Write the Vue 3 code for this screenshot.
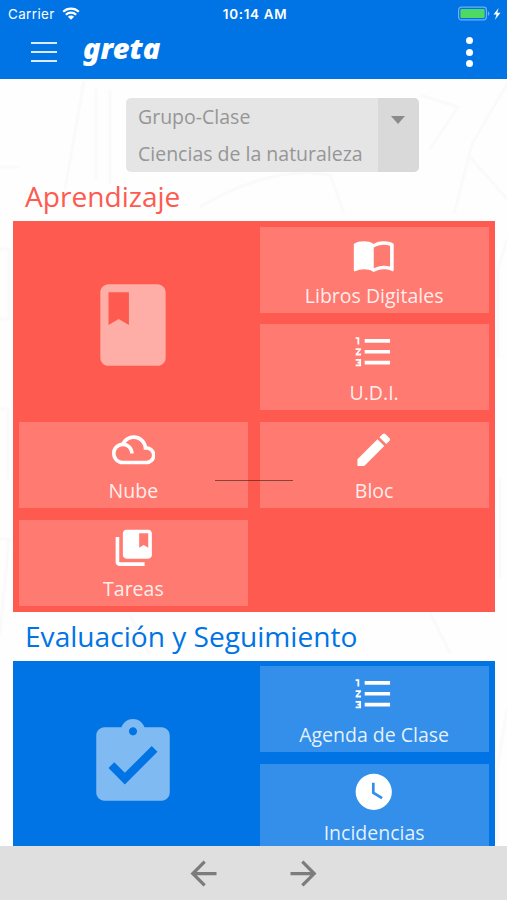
<template>
    <div id="screen">
        <header id="header">
            <div id="status-bar">
                <div class="carrier">
                    <span>Carrier</span>
                    <svg class="wifi" viewBox="0 0 18 13">
                        <path d="M1.2 4.8a11.2 11.2 0 0 1 15.6 0M3.9 7.7a7.3 7.3 0 0 1 10.2 0" fill="none" stroke="#fff" stroke-width="2.2" />
                        <path d="M9 12.8L5.9 9.8a4.4 4.4 0 0 1 6.2 0z" fill="#fff" />
                    </svg>
                </div>
                <span class="clock">10:14 AM</span>
                <div class="battery">
                    <svg viewBox="0 0 44 16">
                        <rect x=".6" y="1.1" width="27.8" height="12.8" rx="2.8" fill="none" stroke="#6eb0f3" stroke-width="1.2" />
                        <rect x="2.4" y="2.9" width="24.2" height="9.2" rx="1" fill="#4cd964" />
                        <path d="M29.9 5.2c2 .8 2 3.8 0 4.6z" fill="#6eb0f3" />
                        <path d="M40.600 2L35.500 8.500h3l-1.500 5.200L42.500 6.800h-3.200z" fill="#fff" />
                    </svg>
                </div>
            </div>
            <div id="nav-bar">
                <button class="menu-btn" aria-label="menu">
                    <i></i><i></i><i></i>
                </button>
                <span class="logo">greta</span>
                <button class="more-btn" aria-label="more">
                    <i></i><i></i><i></i>
                </button>
            </div>
        </header>

        <main id="content">
            <svg class="doodles" viewBox="0 0 507 767" fill="none" stroke="#fafafa" stroke-width="3">
                <path d="M84 2L65 110M96 10v90M110 10v95M420 16l38 12-28 42M507 5l-35 60-18 70M470 78l37 42M0 88h20M200 128q70-42 130-32l14 38" />
                <path d="M0 170h9v70H0M507 160l-9 30v90M0 330h8v70M500 400v100M0 460h9l-9 95M430 534l20 40M507 630l-10 60v75M130 536l20 40" />
            </svg>

            <div id="group-select">
                <div class="group-text">
                    <span>Grupo-Clase</span>
                    <span>Ciencias de la naturaleza</span>
                </div>
                <div class="group-arrow"></div>
            </div>

            <section v-for="s in sections" :key="s.title" :class="s.color">
                <h2>{{ s.title }}</h2>
                <div class="panel">
                    <div class="cover">
                        <svg viewBox="0 0 24 24"><path :d="icons[s.icon]" /></svg>
                    </div>
                    <div v-for="t in s.tiles" :key="t.label" class="tile">
                        <svg viewBox="0 0 24 24"><path :d="icons[t.icon]" /></svg>
                        <span>{{ t.label }}</span>
                    </div>
                </div>
            </section>
            <div class="divider"></div>
        </main>

        <footer id="footer">
            <button aria-label="back">
                <svg viewBox="0 0 24 24"><path :d="icons.back" /></svg>
            </button>
            <button aria-label="forward">
                <svg viewBox="0 0 24 24"><path :d="icons.forward" /></svg>
            </button>
        </footer>
    </div>
</template>

<script setup>
const icons = {
    book: "M18 2H6c-1.100 0-2 .9-2 2v16c0 1.100.9 2 2 2h12c1.100 0 2-.9 2-2V4c0-1.100-.9-2-2-2zM6 4h5v8l-2.500-1.500L6 12V4z",
    reader: "M21 5c-1.110-.35-2.330-.5-3.500-.5-1.950 0-4.050.4-5.500 1.500-1.450-1.100-3.550-1.500-5.500-1.500S2.450 4.900 1 6v14.650c0 .25.25.5.5.5.1 0 .15-.05.25-.05C3.100 20.450 5.050 20 6.500 20c1.950 0 4.050.4 5.500 1.500 1.350-.85 3.800-1.500 5.500-1.500 1.650 0 3.350.3 4.750 1.050.1.05.15.05.25.05.25 0 .5-.25.5-.5V6c-.6-.45-1.250-.75-2-1zm0 13.500c-1.100-.35-2.300-.5-3.500-.5-1.700 0-4.150.65-5.500 1.500V8c1.350-.85 3.800-1.500 5.500-1.500 1.200 0 2.400.15 3.500.5v11.500z",
    list: "M2 17h2v.5H3v1h1v.5H2v1h3v-4H2v1zm1-9h1V4H2v1h1v3zm-1 3h1.800L2 13.100v.9h3v-1H3.200L5 10.900V10H2v1zm5-6v2h14V5H7zm0 14h14v-2H7v2zm0-6h14v-2H7v2z",
    cloud: "M19.350 10.040C18.670 6.590 15.640 4 12 4 9.110 4 6.610 5.640 5.360 8.040 2.350 8.360 0 10.900 0 14c0 3.310 2.690 6 6 6h13c2.760 0 5-2.240 5-5 0-2.640-2.050-4.780-4.650-4.960zM19 18H6c-2.210 0-4-1.790-4-4s1.790-4 4-4 4 1.790 4 4h2c0-2.760-1.860-5.080-4.400-5.780C8.610 6.880 10.200 6 12 6c3.030 0 5.500 2.470 5.500 5.500v.5H19c1.660 0 3 1.340 3 3s-1.340 3-3 3z",
    pencil: "M3 17.250V21h3.750L17.810 9.940l-3.750-3.750L3 17.250zM20.710 7.040c.39-.39.39-1.020 0-1.410l-2.340-2.340c-.39-.39-1.020-.39-1.410 0l-1.830 1.830 3.750 3.750 1.830-1.830z",
    collection: "M4 6H2v14c0 1.100.9 2 2 2h14v-2H4V6zM20 2H8c-1.100 0-2 .9-2 2v12c0 1.100.9 2 2 2h12c1.100 0 2-.9 2-2V4c0-1.100-.9-2-2-2zm0 10l-2.500-1.500L15 12V4h5v8z",
    clipboard: "M19 3h-4.180C14.400 1.840 13.300 1 12 1c-1.300 0-2.400.84-2.820 2H5c-1.100 0-2 .9-2 2v14c0 1.100.9 2 2 2h14c1.100 0 2-.9 2-2V5c0-1.100-.9-2-2-2zm-7 0c.55 0 1 .45 1 1s-.45 1-1 1-1-.45-1-1 .45-1 1-1zm-2 14l-4-4 1.410-1.410L10 14.170l6.590-6.590L18 9l-8 8z",
    clock: "M12 2C6.500 2 2 6.500 2 12s4.500 10 10 10 10-4.500 10-10S17.500 2 12 2zm4.200 14.200L11 13V7h1.500v5.200l4.500 2.700-.8 1.300z",
    back: "M20 11H7.830l5.590-5.590L12 4l-8 8 8 8 1.410-1.410L7.830 13H20v-2z",
    forward: "M12 4l-1.410 1.410L16.170 11H4v2h12.170l-5.580 5.590L12 20l8-8z",
}

const sections = [
    {
        title: "Aprendizaje",
        color: "red",
        icon: "book",
        tiles: [
            { label: "Libros Digitales", icon: "reader" },
            { label: "U.D.I.", icon: "list" },
            { label: "Nube", icon: "cloud" },
            { label: "Bloc", icon: "pencil" },
            { label: "Tareas", icon: "collection" },
        ],
    },
    {
        title: "Evaluación y Seguimiento",
        color: "blue",
        icon: "clipboard",
        tiles: [
            { label: "Agenda de Clase", icon: "list" },
            { label: "Incidencias", icon: "clock" },
        ],
    },
]
</script>

<style>
body {
    margin: 0;
    overflow: hidden;
}
</style>

<style scoped>
#screen {
    display: flex;
    flex-direction: column;
    width: 507px;
    height: 900px;
    overflow: hidden;
    background-color: #fefefe;
    font-family: "Open Sans", "Noto Sans", sans-serif;
}

button {
    border: 0;
    padding: 0;
    background: none;
}

#header {
    flex: none;
    height: 79px;
    background-color: #0074e4;
    color: white;
}

#status-bar {
    display: grid;
    grid-template-columns: 1fr auto 1fr;
    align-items: center;
    height: 27px;
    padding: 0 5px 0 8px;
    font-family: Inter, sans-serif;
    font-size: 13.4px;
    letter-spacing: 0.4px;
}

.carrier {
    display: flex;
    align-items: center;
    gap: 7px;
}

.wifi {
    width: 18px;
    height: 13px;
}

.clock {
    font-weight: 600;
    letter-spacing: 0.7px;
}

.battery {
    justify-self: end;
    height: 16px;
}

.battery svg {
    display: block;
    width: 44px;
    height: 16px;
}

#nav-bar {
    display: flex;
    align-items: center;
    height: 50px;
    padding: 0 34.500px 0 31px;
}

.menu-btn {
    display: flex;
    flex-direction: column;
    gap: 7px;
    width: 26px;
}

.menu-btn i {
    height: 1.700px;
    background-color: #d9ebfc;
}

.logo {
    flex: 1;
    margin: -8px 0 0 26px;
    font-family: "Noto Sans", "Open Sans", sans-serif;
    font-size: 29px;
    font-weight: 900;
    font-style: italic;
    line-height: 40px;
}

.more-btn {
    display: flex;
    flex-direction: column;
    gap: 4.500px;
}

.more-btn i {
    width: 7px;
    height: 7px;
    border-radius: 50%;
    background-color: white;
}

#content {
    position: relative;
    flex: 1;
    overflow: hidden;
    padding: 19px 12.500px 0 13px;
}

.doodles {
    position: absolute;
    top: 0;
    left: 0;
    width: 507px;
    height: 767px;
}

#group-select {
    position: relative;
    display: flex;
    width: 293.500px;
    height: 74px;
    margin-left: 112.500px;
    border-radius: 5px;
    overflow: hidden;
    background-color: #e5e5e5;
    color: #969696;
    font-size: 19.500px;
}

.group-text {
    flex: 1;
    padding: 1px 0 0 12.500px;
}

.group-text span {
    display: block;
    line-height: 36.500px;
}

.group-arrow {
    width: 41px;
    background-color: #d9d9d9;
}

.group-arrow::before {
    content: "";
    display: block;
    width: 0;
    margin: 18px 0 0 13px;
    border: 7.500px solid transparent;
    border-top: 8px solid #8b8b8b;
    border-bottom: 0;
}

section {
    position: relative;
}

h2 {
    box-sizing: border-box;
    height: 49px;
    margin: 0;
    padding: 5px 0 0 12px;
    font-size: 28.100px;
    font-weight: 400;
    line-height: 38px;
}

.panel {
    display: grid;
    grid-template-columns: 1fr 1fr;
    grid-auto-rows: 86px;
    gap: 11.700px 12px;
    padding: 5.800px 6px;
}

.cover {
    grid-row: span 2;
    display: flex;
    align-items: center;
    justify-content: center;
    padding-top: 12px;
}

.cover svg {
    width: 98px;
    height: 98px;
    fill: rgba(255, 255, 255, 0.5);
}

.tile {
    display: flex;
    flex-direction: column;
    align-items: center;
    padding-top: 6px;
    background-color: rgba(255, 255, 255, 0.2);
    color: rgba(255, 255, 255, 0.88);
    font-size: 19.500px;
    line-height: 27px;
}

.tile svg {
    width: 43.500px;
    height: 43.500px;
    margin-bottom: 5.500px;
    fill: white;
}

.red h2 {
    color: #ff5a4f;
}

.red .panel {
    background-color: #ff5a4f;
}

.blue h2 {
    color: #0074e4;
}

.blue .panel {
    background-color: #0074e4;
}

/* hairline floating over the tiles */
.divider {
    position: absolute;
    top: 401px;
    left: 215px;
    width: 78px;
    height: 1px;
    background-color: rgba(60, 30, 20, 0.6);
}

#footer {
    flex: none;
    display: flex;
    align-items: center;
    justify-content: center;
    gap: 61px;
    height: 54px;
    background-color: #dfdfdf;
}

#footer svg {
    display: block;
    width: 39px;
    height: 39px;
    fill: #7c7c7c;
}
</style>
